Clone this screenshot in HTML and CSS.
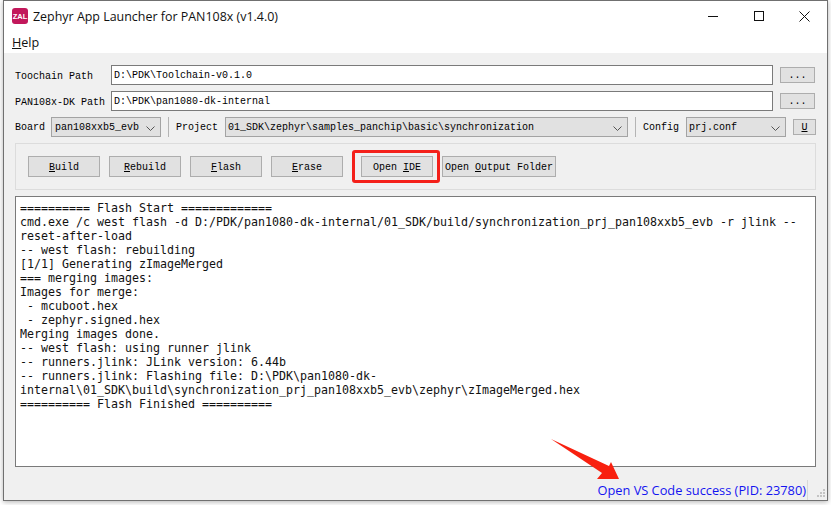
FILE: index.html
```html
<!DOCTYPE html>
<html lang="en">
<head>
<meta charset="utf-8">
<title>Zephyr App Launcher for PAN108x (v1.4.0)</title>
<link rel="stylesheet" href="styles.css">
</head>
<body>
<div class="window">
  <header class="titlebar">
    <svg class="app-icon" width="16" height="16" viewBox="0 0 16 16"><rect width="16" height="16" rx="3" fill="#c2185b"/><text x="8" y="11" text-anchor="middle" class="app-icon-text">ZAL</text></svg>
    <span class="title">Zephyr App Launcher for PAN108x (v1.4.0)</span>
    <div class="caption">
      <svg width="11" height="11" viewBox="0 0 11 11"><path d="M0 5.5h10" stroke="#111" fill="none"/></svg>
      <svg width="11" height="11" viewBox="0 0 11 11"><rect x=".5" y=".5" width="9" height="9" stroke="#111" fill="none"/></svg>
      <svg width="11" height="11" viewBox="0 0 11 11"><path d="M.5.5l10 10M10.500.5l-10 10" stroke="#111" fill="none"/></svg>
    </div>
  </header>
  <nav class="menubar"><span><u>H</u>elp</span></nav>
  <main class="content">
    <div class="path-row">
      <label class="path-label">Toochain Path</label>
      <div class="input">D:\PDK\Toolchain-v0.1.0</div>
      <button class="btn browse">...</button>
    </div>
    <div class="path-row">
      <label class="path-label">PAN108x-DK Path</label>
      <div class="input">D:\PDK\pan1080-dk-internal</div>
      <button class="btn browse">...</button>
    </div>
    <div class="select-row">
      <label class="board-label">Board</label>
      <div class="combo board"><span>pan108xxb5_evb</span><svg width="9" height="5" viewBox="0 0 9 5"><path d="M.5.5l4 4 4-4" stroke="#555" fill="none"/></svg></div>
      <i class="sep"></i>
      <label class="project-label">Project</label>
      <div class="combo project"><span>01_SDK\zephyr\samples_panchip\basic\synchronization</span><svg width="9" height="5" viewBox="0 0 9 5"><path d="M.5.5l4 4 4-4" stroke="#555" fill="none"/></svg></div>
      <i class="sep"></i>
      <label class="config-label">Config</label>
      <div class="combo config"><span>prj.conf</span><svg width="9" height="5" viewBox="0 0 9 5"><path d="M.5.5l4 4 4-4" stroke="#555" fill="none"/></svg></div>
      <button class="btn update"><u>U</u></button>
    </div>
    <section class="group">
      <button class="btn action"><u>B</u>uild</button>
      <button class="btn action"><u>R</u>ebuild</button>
      <button class="btn action"><u>F</u>lash</button>
      <button class="btn action"><u>E</u>rase</button>
      <button class="btn action ide">Open <u>I</u>DE</button>
      <button class="btn output">Open <u>O</u>utput Folder</button>
    </section>
    <pre class="log">========== Flash Start =============
cmd.exe /c west flash -d D:/PDK/pan1080-dk-internal/01_SDK/build/synchronization_prj_pan108xxb5_evb -r jlink --
reset-after-load
-- west flash: rebuilding
[1/1] Generating zImageMerged
=== merging images:
Images for merge:
 - mcuboot.hex
 - zephyr.signed.hex
Merging images done.
-- west flash: using runner jlink
-- runners.jlink: JLink version: 6.44b
-- runners.jlink: Flashing file: D:\PDK\pan1080-dk-
internal\01_SDK\build\synchronization_prj_pan108xxb5_evb\zephyr\zImageMerged.hex
========== Flash Finished ==========</pre>
    <footer class="status">
      <span class="status-text">Open VS Code success (PID: 23780)</span>
      <svg class="grip" width="10" height="9" viewBox="0 0 10 9"><path d="M7 0h2v2H7zM4 3h2v2H4zM7 3h2v2H7zM1 6h2v2H1zM4 6h2v2H4zM7 6h2v2H7z" fill="#c4c4c4"/></svg>
    </footer>
  </main>
  <div class="mark-box"></div>
  <svg class="mark-arrow" width="80" height="50" viewBox="0 0 80 50"><path d="M1 1L59 28L61 24L69 41L47 41L52 35Z" fill="#f8200f"/></svg>
</div>
</body>
</html>
```
FILE: styles.css
```css
* { box-sizing: border-box; }
html, body { margin: 0; padding: 0; }
body { width: 831px; height: 505px; background: #fff; overflow: hidden; }
.window {
  position: relative;
  width: 825px;
  height: 501px;
  margin-left: 3px;
  border: 1px solid #707070;
  display: flex;
  flex-direction: column;
  background: #fff;
  box-shadow: 0 1px 5px rgba(0,0,0,.3);
}
.titlebar { height: 30px; flex: none; display: flex; align-items: center; padding: 0 0 0 8px; }
.app-icon { flex: none; }
.app-icon-text { font: bold 7.5px "Liberation Sans", sans-serif; fill: #fff; }
.title { margin-left: 5px; font: 12.45px "Open Sans", "Noto Sans", sans-serif; color: #111; }
.caption { margin-left: auto; display: flex; gap: 34.500px; padding-right: 17px; align-items: center; }
.menubar { height: 22px; flex: none; padding: 3px 0 0 8px; font: 12.6px/18px "Open Sans", "Noto Sans", sans-serif; color: #111; }
.content { flex: 1; min-height: 0; background: #f0f0f0; padding: 12px 11px 0; display: flex; flex-direction: column; font: 10px/1 "Liberation Mono", monospace; color: #000; }
.path-row { display: flex; align-items: center; height: 20px; margin-bottom: 6px; }
.path-label { width: 96px; flex: none; padding-top: 3px; }
.input { width: 662px; height: 20px; flex: none; background: #fff; border: 1px solid #7a7a7a; padding: 1px 2px 0; line-height: 18px; }
.btn { font: inherit; color: #000; background: #e1e1e1; border: 1px solid #adadad; padding: 2px 0 0; }
.browse { width: 35px; height: 16px; margin-left: 7px; }
.select-row { display: flex; align-items: center; height: 20px; margin-bottom: 6px; }
.board-label { width: 36px; flex: none; padding-top: 2px; }
.combo { height: 20px; flex: none; background: #e1e1e1; border: 1px solid #a3a3a3; display: flex; align-items: center; justify-content: space-between; padding: 2px 5px 0 2px; }
.board { width: 110px; padding-left: 3px; }
.project { width: 403px; }
.config { width: 100px; }
.sep { width: 1px; height: 20px; flex: none; background: #b4b4b4; margin: 0 7px 0 7px; }
.project-label { width: 49px; flex: none; padding-top: 2px; }
.config-label { width: 43px; flex: none; padding-top: 2px; }
.update { width: 23px; height: 16px; margin-left: 7px; }
.group { height: 47px; flex: none; border: 1px solid #dcdcdc; display: flex; align-items: center; padding: 0 0 0 12px; }
.action { width: 72px; height: 21px; margin-right: 9px; flex: none; }
.ide { margin-left: 9px; }
.output { width: 114px; height: 21px; flex: none; }
.log {
  height: 271px;
  flex: none;
  margin: 6px 0 0;
  background: #fff;
  border: 1px solid #7a7a7a;
  padding: 4px 4px;
  font: 11.63px/14px "DejaVu Sans Mono", monospace;
  color: #111;
  white-space: pre-wrap;
  overflow: hidden;
}
.status { flex: 1; position: relative; display: flex; align-items: flex-end; justify-content: flex-end; }
.status-text { font: 12.8px/20px "Open Sans", "Noto Sans", sans-serif; color: #1414f0; border-right: 1px solid #d8d8d8; padding-right: 1px; margin-right: 8px; height: 20px; white-space: nowrap; }
.grip { position: absolute; right: -10px; bottom: 2px; }
.mark-box { position: absolute; left: 348px; top: 149px; width: 88px; height: 33px; border: 3px solid #f4201a; border-radius: 3px; }
.mark-arrow { position: absolute; left: 546px; top: 437px; }
```
